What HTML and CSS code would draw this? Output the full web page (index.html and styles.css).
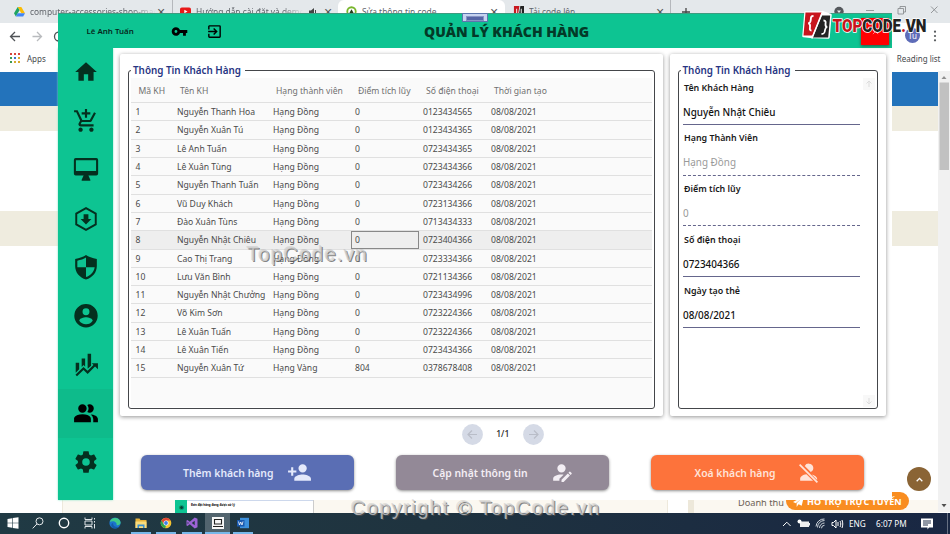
FILE: index.html
```html
<!DOCTYPE html>
<html lang="vi">
<head>
<meta charset="utf-8">
<title>Quản lý khách hàng</title>
<link rel="stylesheet" href="styles.css">
</head>
<body>
<div class="desktop">

  <section class="browser">
    <div class="tabs">
      <div class="tab t1">
        <svg class="fav" viewBox="0 0 12 12"><path fill="#fbbc04" d="M4 1h4l4 7H8z"/><path fill="#1ea362" d="M4 1l2 3.500-4 7L0 8z"/><path fill="#4285f4" d="M4 8h8l-2 3.500H2z"/></svg>
        <span class="tab-name fade">computer-accessories-shop-mag</span><i class="x">×</i>
      </div>
      <div class="tab t2">
        <svg class="fav" viewBox="0 0 12 12"><rect y="1.500" width="12" height="9" rx="2" fill="#e81919"/><path fill="#fff" d="M4.700 4l3.500 2-3.500 2z"/></svg>
        <span class="tab-name fade">Hướng dẫn cài đặt và demo</span>
        <svg class="speaker" viewBox="0 0 10 10"><path fill="#444" d="M0 3.500h2L5 1v8L2 6.500H0z"/><path fill="none" stroke="#444" d="M6.500 3v4"/></svg><i class="x">×</i>
      </div>
      <div class="tab t3 on">
        <svg class="fav" viewBox="0 0 12 12"><circle cx="6" cy="6" r="4.600" fill="none" stroke="#78b52b" stroke-width="2"/><path fill="#263b18" d="M6 3.500l2.300 4H3.700z"/></svg>
        <span class="tab-name">Sửa thông tin code</span><i class="x">×</i>
      </div>
      <div class="tab t4">
        <svg class="fav" viewBox="0 0 12 12"><path fill="#c8171e" d="M1 0h6L5 12H1z"/><path fill="#222" d="M8 0h4v12H6z"/><path stroke="#fff" d="M4 3v6M9 3v6"/></svg>
        <span class="tab-name">Tải code lên</span><i class="x">×</i>
      </div>
      <svg class="plus" viewBox="0 0 10 10"><path stroke="#444" stroke-width="1.300" d="M5 1v8M1 5h8"/></svg>
      <svg class="win-controls" viewBox="0 0 120 24"><circle cx="9" cy="11.500" r="4.700" fill="#54585c"/><path d="M7 10.500h4l-2 2.500z" fill="#eee"/><path d="M36 10.500h8M68 8.500h5.500v5.500H68zM70 8.500v-2h5.500V12H73.500M101 6.500l6.500 6.500M107.500 6.500L101 13" fill="none" stroke="#8b8e92" stroke-width=".9"/></svg>
    </div>
    <div class="toolbar">
      <svg class="nav" viewBox="0 0 60 24"><path d="M20 12.500h-9M15 8l-4.500 4.500L15 17" fill="none" stroke="#505357" stroke-width="1.300"/><path d="M32.500 12.500h9M37 8l4.500 4.500L37 17" fill="none" stroke="#b9bbbe" stroke-width="1.300"/><path d="M59 8a4.500 4.500 0 0 0 0 9" fill="none" stroke="#505357" stroke-width="1.300"/></svg>
      <span class="avatar">Tu</span>
      <svg class="dots" viewBox="0 0 4 12"><g fill="#55585b"><circle cx="2" cy="1.700" r="1.100"/><circle cx="2" cy="6" r="1.100"/><circle cx="2" cy="10.300" r="1.100"/></g></svg>
    </div>
    <div class="bookmarks">
      <svg class="apps" viewBox="0 0 10 10"><path fill="#d8453b" d="M0 0h2v2H0zM4 0h2v2H4zM8 0h2v2H8z"/><path fill="#3d9b52" d="M0 4h2v2H0zM0 8h2v2H0z"/><path fill="#3c74c9" d="M4 4h2v2H4z"/><path fill="#d8a92e" d="M8 4h2v2H8zM4 8h2v2H4zM8 8h2v2H8z"/></svg>
      <span>Apps</span><span class="reading">Reading list</span>
    </div>
    <div class="page">
      <div class="page-body">
        <div class="band blue"></div><div class="band beige b1"></div><div class="gap1"></div><div class="band beige b2"></div><div class="gap2"></div>
        <div class="page-foot">
          <div class="foot-left"><div class="mini"><div class="mini-side">◉</div><div class="mini-main">Đơn đặt hàng đang được xử lý</div></div></div>
          <div class="foot-gap"></div>
          <div class="foot-right"><span>Doanh thu</span></div>
        </div>
      </div>
      <svg class="scroll" viewBox="0 0 12 441"><path fill="#f1f1f1" d="M0 0h12v441H0z"/><path fill="#c1c1c1" d="M1.500 11.500h9.500v87.500H1.500z"/><path fill="#8f8f8f" d="M3.500 8h5L6 5z"/><path fill="#505050" d="M3.500 433h5L6 436.300z"/></svg>
    </div>
    <div class="support"><svg viewBox="0 0 12 12"><path fill="#fff" d="M0 6.500L12 0 9.500 10.500 6 9l-2 3V8l5-5-6 5z"/></svg><span>HỖ TRỢ TRỰC TUYẾN</span></div>
    <div class="to-top"><svg viewBox="0 0 8 8"><path d="M1.500 5.500L4 3l2.500 2.500" fill="none" stroke="#fff" stroke-width="1.200"/></svg></div>
  </section>

  <section class="app">
    <header class="app-head">
      <span class="user">Lê Anh Tuấn</span>
      <svg class="key" viewBox="0 0 24 24"><path d="M12.650 10C11.830 7.670 9.610 6 7 6c-3.310 0-6 2.690-6 6s2.690 6 6 6c2.610 0 4.830-1.670 5.650-4H17v4h4v-4h2v-4H12.650zM7 14c-1.100 0-2-.9-2-2s.9-2 2-2 2 .9 2 2-.9 2-2 2z"/></svg>
      <svg class="exit" viewBox="0 0 24 24"><path d="M19 3H5c-1.110 0-2 .9-2 2v4h2V5h14v14H5v-4H3v4a2 2 0 0 0 2 2h14a2 2 0 0 0 2-2V5a2 2 0 0 0-2-2m-8.920 12.580L11.500 17l5-5-5-5-1.420 1.410L12.670 11H3v2h9.670z"/></svg>
      <h1>QUẢN LÝ KHÁCH HÀNG</h1>
      <button class="close"><svg viewBox="0 0 8 8"><path d="M1 1l6 6M7 1L1 7" stroke="#ff8d8d"/></svg></button>
      <span class="grip"></span>
    </header>
    <div class="app-body">
      <nav class="side">
        <a><svg viewBox="0 0 24 24"><path d="M10 20v-6h4v6h5v-8h3L12 3 2 12h3v8z"/></svg></a>
        <a><svg viewBox="0 0 24 24"><path d="M11 9h2V6h3V4h-3V1h-2v3H8v2h3zm-4 9c-1.100 0-2 .9-2 2s.9 2 2 2 2-.9 2-2-.9-2-2-2zm10 0c-1.100 0-2 .9-2 2s.9 2 2 2 2-.9 2-2-.9-2-2-2zm-9.830-3.250l.03-.12.9-1.630h7.450c.75 0 1.410-.41 1.750-1.030l3.860-7.010L19.420 4l-1.110 2-2.760 5H8.530l-.13-.27L6.160 6 4.270 2H1v2h2l3.600 7.590-1.350 2.450c-.16.28-.25.61-.25.96 0 1.100.9 2 2 2h12v-2H7.420c-.13 0-.25-.11-.25-.25z"/></svg></a>
        <a><svg viewBox="0 0 24 24"><path d="M21.500 1h-19A1.800 1.800 0 0 0 .8 2.800v12.400A1.800 1.800 0 0 0 2.500 17h7.300L8 21v1h8v-1l-1.800-4h7.300a1.800 1.800 0 0 0 1.700-1.800V2.800A1.800 1.800 0 0 0 21.500 1zm-.2 12H2.700V3h18.600z"/></svg></a>
        <a><svg viewBox="0 0 24 24"><path d="M12 2l9 5v10l-9 5-9-5V7z" fill="none" stroke="#04301f" stroke-width="1.800"/><path d="M9.800 7.500h4.400V12h2.800l-5 5-5-5h2.800z"/></svg></a>
        <a><svg viewBox="0 0 24 24"><path d="M12 1C10 2.500 6 4 2 4.500V11c0 6 4 10.700 10 12.500 6-1.800 10-6.500 10-12.500V4.500C18 4 14 2.500 12 1zm0 11.200h8c-.6 4.300-3.600 7.500-8 9.100v-9.100H4V6.200c3-.5 6-1.600 8-2.900z"/></svg></a>
        <a><svg viewBox="0 0 24 24"><path d="M12 1a10.800 10.800 0 1 0 0 21.600A10.800 10.800 0 0 0 12 1zm0 3.800a3.200 3.200 0 1 1 0 6.400 3.200 3.200 0 0 1 0-6.400zm0 14.800c-2.600 0-4.900-1.300-6.200-3.300 0-2.100 4.100-3.200 6.200-3.200s6.200 1.100 6.200 3.200a7.400 7.400 0 0 1-6.200 3.300z"/></svg></a>
        <a><svg viewBox="0 0 24 24"><path d="M2.500 10h3.200v6l-3.200 3.200zM8 6h3.200v7.500L9.800 12 8 13.800zM13.500 1.700h3.200v11l-3.200 2.800z"/><path d="M3 21.700l6.700-6.500 3.800 3.600 7-7" fill="none" stroke="#04301f" stroke-width="2"/><path d="M17.300 10.300H23V16z"/></svg></a>
        <a class="on"><svg viewBox="0 0 24 24"><path d="M16.500 16.500V19.500H1v-3S1 12.300 8.800 12.300s7.700 4.200 7.700 4.200M12.600 7A3.900 3.900 0 1 0 8.700 10.900 3.900 3.900 0 0 0 12.600 7m3.900 5.400a6 6 0 0 1 2.200 4.100v3H23v-3s0-3.700-6.500-4.100M15.300 3.100a3.700 3.700 0 0 0-2.100.6 5.500 5.500 0 0 1 0 6.500 3.700 3.700 0 0 0 2.100.7 3.900 3.900 0 0 0 0-7.800z"/></svg></a>
        <a><svg viewBox="0 0 24 24"><path d="M12 15.500A3.500 3.500 0 1 1 12 8.500a3.500 3.500 0 0 1 0 7m7.430-2.530c.04-.32.07-.64.07-.97s-.03-.66-.07-1l2.110-1.630c.19-.15.24-.42.12-.64l-2-3.460c-.12-.22-.39-.31-.61-.22l-2.490 1c-.52-.39-1.060-.73-1.690-.98l-.37-2.650A.5.5 0 0 0 14 2h-4a.5.5 0 0 0-.5.420l-.37 2.650c-.63.25-1.170.59-1.690.98l-2.490-1c-.22-.09-.49 0-.61.22l-2 3.460c-.13.22-.07.49.12.64L4.570 11c-.04.34-.07.67-.07 1s.03.65.07.97l-2.110 1.660c-.19.15-.25.42-.12.64l2 3.460c.12.22.39.3.61.22l2.490-1.010c.52.4 1.060.74 1.690.99l.37 2.650c.04.24.25.42.5.42h4c.25 0 .46-.18.5-.42l.37-2.650c.63-.26 1.170-.59 1.690-.99l2.490 1.010c.22.08.49 0 .61-.22l2-3.460c.12-.22.07-.49-.12-.64z"/></svg></a>
      </nav>
      <main class="main">
        <div class="cards">
          <div class="card list">
            <fieldset><legend>Thông Tin Khách Hàng</legend>
              <div class="grid" id="grid">
                <div class="row head"><span>Mã KH</span><span>Tên KH</span><span>Hạng thành viên</span><span>Điểm tích lũy</span><span>Số điện thoại</span><span>Thời gian tạo</span></div>
                <div class="row"><span>1</span><span>Nguyễn Thanh Hoa</span><span>Hạng Đồng</span><span>0</span><span>0123434565</span><span>08/08/2021</span></div>
                <div class="row"><span>2</span><span>Nguyễn Xuân Tú</span><span>Hạng Đồng</span><span>0</span><span>0123434365</span><span>08/08/2021</span></div>
                <div class="row"><span>3</span><span>Lê Anh Tuấn</span><span>Hạng Đồng</span><span>0</span><span>0723434365</span><span>08/08/2021</span></div>
                <div class="row"><span>4</span><span>Lê Xuân Tùng</span><span>Hạng Đồng</span><span>0</span><span>0723434366</span><span>08/08/2021</span></div>
                <div class="row"><span>5</span><span>Nguyễn Thanh Tuấn</span><span>Hạng Đồng</span><span>0</span><span>0723434266</span><span>08/08/2021</span></div>
                <div class="row"><span>6</span><span>Vũ Duy Khách</span><span>Hạng Đồng</span><span>0</span><span>0723134366</span><span>08/08/2021</span></div>
                <div class="row"><span>7</span><span>Đào Xuân Tùns</span><span>Hạng Đồng</span><span>0</span><span>0713434333</span><span>08/08/2021</span></div>
                <div class="row sel"><span>8</span><span>Nguyễn Nhật Chiêu</span><span>Hạng Đồng</span><span class="focus">0</span><span>0723404366</span><span>08/08/2021</span></div>
                <div class="row"><span>9</span><span>Cao Thị Trang</span><span>Hạng Đồng</span><span>0</span><span>0723334366</span><span>08/08/2021</span></div>
                <div class="row"><span>10</span><span>Lưu Văn Bình</span><span>Hạng Đồng</span><span>0</span><span>0721134366</span><span>08/08/2021</span></div>
                <div class="row"><span>11</span><span>Nguyễn Nhật Chưởng</span><span>Hạng Đồng</span><span>0</span><span>0723434996</span><span>08/08/2021</span></div>
                <div class="row"><span>12</span><span>Võ Kim Sơn</span><span>Hạng Đồng</span><span>0</span><span>0723224366</span><span>08/08/2021</span></div>
                <div class="row"><span>13</span><span>Lê Xuân Tuấn</span><span>Hạng Đồng</span><span>0</span><span>0723224366</span><span>08/08/2021</span></div>
                <div class="row"><span>14</span><span>Lê Xuân Tiến</span><span>Hạng Đồng</span><span>0</span><span>0723434366</span><span>08/08/2021</span></div>
                <div class="row"><span>15</span><span>Nguyễn Xuân Tứ</span><span>Hạng Vàng</span><span>804</span><span>0378678408</span><span>08/08/2021</span></div>
              </div>
            </fieldset>
          </div>
          <div class="card detail">
            <fieldset><legend>Thông Tin Khách Hàng</legend>
              <div class="form">
                <div class="fields">
                  <div class="field"><label>Tên Khách Hàng</label><p>Nguyễn Nhật Chiêu</p></div>
                  <div class="field off"><label>Hạng Thành Viên</label><p>Hạng Đồng</p></div>
                  <div class="field off"><label>Điểm tích lũy</label><p>0</p></div>
                  <div class="field"><label>Số điện thoại</label><p>0723404366</p></div>
                  <div class="field"><label>Ngày tạo thẻ</label><p>08/08/2021</p></div>
                </div>
                <div class="steps">
                  <svg viewBox="0 0 12 12"><path d="M6 9V3M3.500 5.500L6 3l2.500 2.500" fill="none" stroke="#dcdcdc"/></svg>
                  <svg viewBox="0 0 12 12"><path d="M6 3v6M3.500 6.500L6 9l2.500-2.500" fill="none" stroke="#dcdcdc"/></svg>
                </div>
              </div>
            </fieldset>
          </div>
        </div>
        <div class="pager">
          <svg viewBox="0 0 21 21"><circle cx="10.500" cy="10.500" r="10.400" fill="#d5dae6"/><path d="M15 10.500H6.500M10 6.500l-4 4 4 4" fill="none" stroke="#b9bdc8" stroke-width="1.200"/></svg>
          <span>1/1</span>
          <svg viewBox="0 0 21 21"><circle cx="10.500" cy="10.500" r="10.400" fill="#d5dae6"/><path d="M6 10.500h8.500M11 6.500l4 4-4 4" fill="none" stroke="#b9bdc8" stroke-width="1.200"/></svg>
        </div>
        <div class="actions">
          <button class="add"><span>Thêm khách hàng</span><svg viewBox="0 0 24 24"><path d="M15 14c-2.670 0-8 1.330-8 4v2h16v-2c0-2.670-5.330-4-8-4m-9-4V7H4v3H1v2h3v3h2v-3h3v-2m6 2a4 4 0 1 0-4-4 4 4 0 0 0 4 4z"/></svg></button>
          <button class="edit"><span>Cập nhật thông tin</span><svg viewBox="0 0 24 24"><path d="M21.700 13.350l-1 1-2.050-2.050 1-1a.55.55 0 0 1 .77 0l1.280 1.280c.21.21.21.56 0 .77M12 18.940l6.060-6.060 2.050 2.050L14.060 21H12v-2.060M12 14c-4.420 0-8 1.790-8 4v2h6v-1.890l4-4c-.66-.08-1.330-.11-2-.11m0-10a4 4 0 1 0 0 8 4 4 0 0 0 0-8z"/></svg></button>
          <button class="del"><span>Xoá khách hàng</span><svg viewBox="0 0 24 24"><path d="M12.500 3.500a4.200 4.200 0 0 1 1.700 8L8.400 5.700A4.200 4.200 0 0 1 12.500 3.500zM10 13.600L16.400 20H4v-2c0-2.200 2.600-3.900 6-4.400zM15 13.800c3 .6 5.300 2.200 5.300 4.200v1.200z"/><path d="M3.500 4.500l17 17" fill="none" stroke="#ffe3d8" stroke-width="1.700"/></svg></button>
        </div>
      </main>
    </div>
  </section>

  <footer class="taskbar">
    <div class="tasks">
      <i><svg viewBox="0 0 12 12"><path fill="#fff" d="M.5 2l4.700-.8v4.500H.5zM5.800 1.100L11.500.2v5.500H5.800zM.5 6.300h4.700v4.500L.5 10zM5.800 6.300h5.700v5.500l-5.700-.9z"/></svg></i>
      <i><svg viewBox="0 0 12 12"><circle cx="7.500" cy="4.300" r="3.500" fill="none" stroke="#e6eaec"/><path d="M5 6.900L.7 11.400" stroke="#e6eaec"/></svg></i>
      <i><svg viewBox="0 0 12 12"><circle cx="6" cy="6" r="4.700" fill="none" stroke="#fff" stroke-width="1.400"/></svg></i>
      <i><svg viewBox="0 0 12 12"><path d="M1 .5v2h7v-2M1 11.500v-2h7v2M1 4h7v4H1zM10.500 1v1.500M10.500 4v1.500M10.500 7v4.500" fill="none" stroke="#dfe4e7"/></svg></i>
      <i><svg viewBox="0 0 12 12"><circle cx="6" cy="6" r="5.600" fill="#1b74cd"/><path fill="#3fc98a" d="M.8 5A5.600 5.600 0 0 1 11.600 5.500C11.500 8 9 8.500 7.500 8 8.500 5.500 4.500 3 .8 5z"/><path fill="#155ba8" d="M4.200 6c-.8 2.500 2 4.800 5.800 3.700A5.600 5.600 0 0 1 4 11C1.500 9.500 2 6.500 4.200 6z"/></svg></i>
      <i class="run"><svg viewBox="0 0 12 12"><path fill="#e8b33a" d="M.5 1.500h4l1 1.500h6v8H.5z"/><path fill="#fbdc7b" d="M.5 4.500h11V11H.5z"/><path fill="#3a8fd0" d="M2.500 7.500h7V11H8V9.200H4V11H2.500z"/></svg></i>
      <i class="run"><svg viewBox="0 0 12 12"><circle cx="6" cy="6" r="5.300" fill="#f4c430"/><path fill="#df4436" d="M1.400 3.400A5.300 5.300 0 0 1 10.700 3.500H6L3.800 7.200z"/><path fill="#2da34f" d="M1.400 3.400L3.800 7.200 6 8.500l-.8 2.800A5.300 5.300 0 0 1 1.400 3.400z"/><circle cx="6" cy="6" r="2.500" fill="#fff"/><circle cx="6" cy="6" r="1.900" fill="#3f7fe8"/></svg></i>
      <i class="run"><svg viewBox="0 0 12 12"><path fill="#9d63d6" d="M8.700.5L11.500 1.700v8.600L8.700 11.500 3.800 7.300 1.500 9 .5 8.500v-5l1-.5 2.300 1.700zM8.700 3.800L5.800 6l2.900 2.200zM1.600 4.800v2.400L2.800 6z"/></svg></i>
      <i class="run cur"><svg viewBox="0 0 12 12"><path fill="#f7f7f7" d="M0 0h12v12H0z"/><path d="M2.500 2.500h7v4.500h-7zM1 9.500h10" fill="none" stroke="#222" stroke-width="1.100"/></svg></i>
      <i class="run"><svg viewBox="0 0 12 12"><path fill="#3c90dd" d="M3 .8h9v10.400H3z"/><path fill="#1858ae" d="M0 3h7.500v6.500H0z"/><path d="M1.500 4.500l1 3.500L3.700 5 5 8l1-3.500" fill="none" stroke="#fff" stroke-width=".8"/></svg></i>
    </div>
    <div class="tray">
      <svg class="icons" viewBox="0 0 62 14"><path d="M1 9l3.800-3.800L8.600 9" fill="none" stroke="#fff"/><path fill="#eee" d="M18 4.500h9v5.500h-9zM27 6h1v2.500h-1z"/><circle cx="17.500" cy="4.500" r="2" fill="#fff"/><g fill="none" stroke="#cfd5dc"><path d="M35.500 10.500a7 7 0 0 1 7-7M37.500 11a5 5 0 0 1 5-5M39.500 11.300a3 3 0 0 1 3-3M34 9.500a8 8 0 0 1 8.500-7.500"/><path stroke="#fff" d="M50 5.500h1.500L54 3v8l-2.500-2.500H50zM56 5v4M58 4c1 2 1 4 0 6M60 3c1 3 1 5 0 8"/></g></svg>
      <span class="lang">ENG</span><span class="time">6:07 PM</span>
      <svg class="note" viewBox="0 0 12 12"><path fill="#fff" d="M0 .5h12v9H8L6.500 11.500V9.500H0z"/><path stroke="#22304a" d="M2 3h8M2 5h8M2 7h5"/></svg>
      <span class="edge"></span>
    </div>
  </footer>

  <svg class="logo" viewBox="0 0 126 30">
    <path d="M3.500 1.500H21l7.500 2.500-2 22.500-16-.5-9-1z" fill="#fff" stroke="#fff" stroke-width="2.500" stroke-linejoin="round"/>
    <path d="M3.500 1.500h16.500L10.500 24.500H1.500z" fill="#c8151d"/><path d="M20 4.500h8.200l-2 22H10.800z" fill="#242424"/>
    <path d="M11.500 5C9 5 9 6 8.800 8.500 8.700 11 8 12 6.300 12.200 8 12.700 8.300 14 8 16c-.3 2.500-.2 3.500 1.500 3.500M21.500 9.500c2.500 0 2.300 1.500 2 3.500-.2 2 .2 2.800 1.700 3-1.600.4-2 1.200-2.200 3-.2 2.500-.5 4-3.500 4" fill="none" stroke="#fff" stroke-width="1.800"/>
    <path d="M20.800 0L9.800 27.500" stroke="#fff" stroke-width="1.500"/>
    <text class="word" x="30.500" y="20.500" textLength="94" lengthAdjust="spacingAndGlyphs"><tspan fill="#c8151d">TOP</tspan><tspan fill="#222">CODE</tspan><tspan fill="#c8151d">.</tspan><tspan fill="#222">VN</tspan></text>
  </svg>
  <span class="mark m1">TopCode.vn</span>
  <span class="mark m2">Copyright © TopCode.vn</span>
</div>
</body>
</html>
```
FILE: styles.css
```css
* { box-sizing: border-box; }
body { margin: 0; font-family: "Noto Sans", "Open Sans", sans-serif; }
svg { display: block; flex: none; }
button { border: 0; font: inherit; padding: 0; }
.desktop { position: relative; width: 950px; height: 534px; overflow: hidden; background: #fff; white-space: nowrap; }

/* browser window behind the app */
.browser { display: flex; flex-direction: column; height: 513px; }
.tabs { display: flex; align-items: center; height: 23px; background: #e4e8eb; color: #60646a; font-size: 8.4px; }
.tab { display: flex; align-items: center; height: 23px; border-right: 1px solid #b5b8bc; background-clip: padding-box; }
.fav { width: 11px; height: 11px; }
.tab-name { flex: 1; margin-left: 5px; overflow: hidden; }
.fade { mask-image: linear-gradient(90deg, #000 80%, transparent); }
.x { font: 14px/12px "Liberation Sans", sans-serif; color: #555; width: 10px; text-align: center; }
.speaker { width: 10px; height: 10px; margin: 0 4px 0 6px; }
.t1 { width: 173px; padding: 0 6px 0 14px; }
.t2 { width: 165px; padding: 0 5px 0 7px; border: 0; }
.t3 { width: 167px; padding: 0 6px 0 8px; border: 0; }
.t4 { width: 166px; padding: 0 5px 0 8px; }
.tab.on { background: #fff; border-radius: 6px 6px 0 0; }
.plus { width: 10px; height: 10px; margin-left: 10px; }
.win-controls { width: 120px; height: 24px; margin-left: 139px; }
.toolbar { display: flex; align-items: center; height: 25px; }
.nav { width: 60px; height: 24px; }
.avatar { width: 15px; height: 15px; margin-left: 845px; border-radius: 50%; background: #5e6cb8; color: #fff; font-size: 8px; line-height: 15px; text-align: center; }
.dots { width: 4px; height: 12px; margin-left: 13px; }
.bookmarks { display: flex; align-items: center; height: 23px; padding: 0 9.500px 3px 10px; font-size: 8px; color: #46494d; }
.bookmarks span { margin-left: 7px; }
.bookmarks .reading { margin-left: auto; }
.apps { width: 10px; height: 10px; }
.page { display: flex; flex: 1; }
.page-body { flex: 1; padding-top: 1px; }
.scroll { width: 12px; height: 441px; }
.blue { height: 34px; background: #2373bb; }
.beige { background: #efecdf; }
.b1 { height: 25px; }
.gap1 { height: 80px; }
.b2 { height: 35px; }
.gap2 { height: 254px; }
.page-foot { display: flex; height: 13px; padding-left: 62px; }
.foot-left { width: 606px; padding-left: 112px; background: #fbf8f1; border-left: 1px solid #eee9dc; border-right: 1px solid #eee9dc; }
.mini { display: flex; width: 139px; height: 13px; background: #fff; border-right: 1px solid #ccc; }
.mini-side { width: 12px; background: #0dc492; color: #043; font-size: 6px; text-align: center; line-height: 15px; }
.mini-main { padding-left: 4px; font-size: 2.900px; line-height: 9px; font-weight: 700; color: #000; flex: 1; border-top: 1px solid #cdd8ec; }
.foot-gap { width: 20px; }
.foot-right { flex: 1; padding-left: 44px; background: #fbf8f1; border-left: 6px solid #ede8da; color: #6b5f55; font-size: 9.200px; line-height: 6px; }
.support { position: absolute; left: 786px; top: 492px; display: flex; align-items: center; width: 123px; height: 18px; padding-left: 7px; border-radius: 9px; background: #f98d20; color: #fff; font: 700 9px "Open Sans", sans-serif; }
.support svg { width: 11px; height: 11px; margin-right: 3px; }
.to-top { position: absolute; left: 907px; top: 467px; width: 24px; height: 24px; padding: 7.500px; border-radius: 50%; background: #8a6435; }
.to-top svg { width: 9px; height: 9px; }

/* management app window */
.app { position: absolute; left: 58px; top: 13px; width: 834px; height: 487px; background: #fff; display: flex; flex-direction: column; }
.app-head { position: relative; display: flex; align-items: center; height: 35px; background: #0dc492; border-top: 1px solid #3d9c80; }
.user { width: 113px; padding-left: 28.500px; font-size: 7.900px; font-weight: 600; color: #06281c; }
.key { width: 17px; height: 17px; }
.exit { width: 17px; height: 17px; margin-left: 18px; }
.app-head h1 { margin: 0 0 0 201px; width: 166px; font: 800 14px "Open Sans", sans-serif; color: #033a28; }
.close { display: flex; justify-content: center; align-items: center; width: 28px; height: 27px; margin-left: 271px; background: #f00; box-shadow: 0 1px 3px rgba(80,0,0,.6); }
.close svg { width: 7px; height: 7px; }
.grip { position: absolute; left: 404px; top: -1px; width: 26px; height: 9px; border: 1px solid #5b76ae; background: #c6d3f0; }
.grip::after { content: ""; display: block; margin: 2px 3px; height: 3px; background: #5565a5; border: 1px solid #8794c4; }
.app-body { display: flex; flex: 1; }
.side { width: 55px; height: 452px; background: #0dc492; box-shadow: 0 0 2px #7fe3c5; }
.side a { display: flex; align-items: center; justify-content: center; height: 48.750px; }
.side svg { width: 26px; height: 26px; fill: #04301f; }
.side .on { background: #0ebb8b; }
.side .on svg { fill: #000; }
.main { flex: 1; padding: 6px 0 0 7px; }
.cards { display: flex; gap: 7px; }
.card { height: 362px; background: #fff; border-radius: 2px; box-shadow: 0 1px 4px rgba(0,0,0,.42); padding: 8.500px 8px 7.500px; }
.list { width: 542.500px; }
.detail { width: 216px; }
fieldset { height: 346px; min-width: 0; margin: 0; padding: 0 2px; border: 1px solid #44464a; border-radius: 3px; }
legend { height: 15px; margin-left: 0; padding: 0 4px 0 2px; font-size: 9.850px; line-height: 15px; font-weight: 600; color: #273583; }
.grid { height: 329px; background: #fafafa; font-size: 8.600px; color: #4a4a4a; }
.row { display: grid; grid-template-columns: 41.500px 96px 82px 68px 68px 1fr; height: 18.300px; border-bottom: 1px solid #e0e0e0; }
.row span { padding-left: 4.500px; line-height: 18px; }
.row.head { height: 25.700px; color: #707070; }
.row.head span { padding-left: 7.500px; line-height: 26px; }
.row.sel { background: #eee; }
.row .focus { border: 1px solid #888; padding-left: 3.500px; line-height: 16px; }
.form { display: flex; justify-content: space-between; height: 329px; padding-left: 2.500px; }
.fields { width: 177px; }
.field { height: 50.750px; }
.field label { display: block; height: 20px; padding-left: 1px; font-size: 8.900px; line-height: 20px; font-weight: 600; color: #1a1a1a; }
.field p { margin: 0; height: 27.300px; border-bottom: 1px solid #65668c; font-size: 9.900px; line-height: 29px; font-weight: 500; color: #111; }
.field.off p { color: #999; border-bottom-style: dashed; font-weight: 400; }
.steps { display: flex; flex-direction: column; justify-content: space-between; }
.steps svg { width: 12px; height: 12px; background: #f8f8f8; }
.pager { display: flex; align-items: center; margin: 7px 0 0 341.500px; height: 22px; font-size: 8.600px; font-weight: 500; color: #222; }
.pager svg { width: 21px; height: 21px; }
.pager span { width: 40.500px; text-align: center; line-height: 16px; margin-top: -1px; }
.actions { display: flex; gap: 41.500px; margin: 10px 0 0 20.500px; }
.actions button { display: flex; align-items: center; width: 213.500px; height: 35px; border-radius: 6px; box-shadow: 0 1px 3px rgba(0,0,0,.45); font-size: 10.400px; font-weight: 600; text-align: left; color: #e4e9fb; }
.actions span { width: 104px; }
.actions svg { width: 25px; height: 25px; fill: currentColor; }
.actions .add { background: #5a6eb4; padding-left: 42.500px; }
.actions .edit { background: #938997; padding-left: 37px; color: #f3eef4; }
.actions .edit span { width: 116px; }
.actions .del { background: #fd733b; padding-left: 44px; color: #ffe3d8; }
.actions .del span { width: 101px; }

/* taskbar */
.taskbar { display: flex; justify-content: space-between; height: 21px; background: linear-gradient(90deg, #203a44, #1f333f 45%, #192743); }
.tasks { display: flex; }
.tasks i { display: flex; align-items: center; justify-content: center; width: 25.600px; flex: none; height: 21px; border-bottom: 2px solid transparent; }
.tasks svg { width: 12px; height: 12px; }
.tasks .run { background: linear-gradient(#78b8ea, #78b8ea) 50% 100% / 20px 2px no-repeat border-box; }
.tasks .cur { background: linear-gradient(#78b8ea, #78b8ea) 50% 100% / 26px 2px no-repeat border-box, #52646e; }
.tray { display: flex; align-items: center; color: #fff; font-size: 8.200px; }
.icons { width: 62px; height: 14px; }
.lang { width: 27px; margin-left: 5px; }
.time { width: 45px; }
.note { width: 12px; height: 12px; }
.edge { width: 1px; height: 21px; margin: 0 2px 0 14px; background: #667083; }

/* overlays */
.logo { position: absolute; left: 802px; top: 11px; width: 126px; height: 30px; overflow: visible; }
.word { font: 900 18px Roboto, sans-serif; stroke: #fff; stroke-width: 1.600px; paint-order: stroke; stroke-linejoin: round; }
.mark { position: absolute; font: 20px/24px "Liberation Sans", sans-serif; color: rgba(205,205,205,.8); text-shadow: 1px 1px 0 rgba(80,80,80,.7), -1px -1px 0 rgba(150,150,150,.25); letter-spacing: 1.450px; }
.m1 { left: 247px; top: 242px; }
.m2 { left: 351px; top: 496px; }
```
